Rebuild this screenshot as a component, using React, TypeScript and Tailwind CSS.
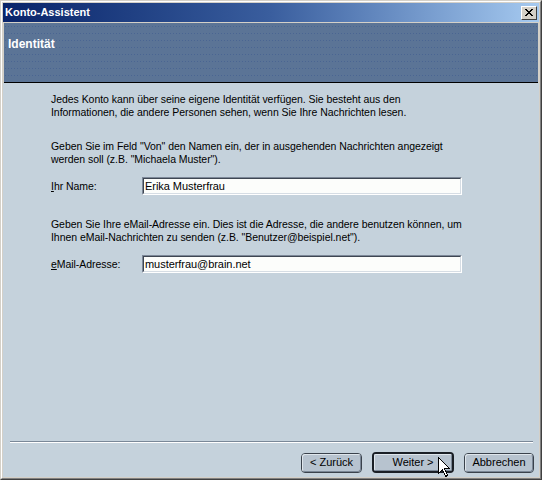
import React from "react";

const font = { fontFamily: '"Liberation Sans", Arial, sans-serif' };

function Field({ value }: { value: string }) {
  return (
    <div className="w-[320px] h-[18px] border border-t-[#7d8898] border-l-[#7d8898] border-b-white border-r-white">
      <div className="h-full border border-t-[#3e4652] border-l-[#3e4652] border-b-[#d6dde4] border-r-[#d6dde4] bg-[#fcfdfb] pl-[1px] text-[11px] leading-[14px] text-black">
        {value}
      </div>
    </div>
  );
}

function Btn({ children, w, def }: { children: React.ReactNode; w: string; def?: boolean }) {
  if (def) {
    return (
      <div className={`${w} h-[21px] rounded-[4px] border-2 border-[#1a1f26] bg-[#b7c3cf] flex items-center justify-center text-[11px] text-black`}>
        <div className="w-full h-full rounded-[2px] border border-t-[#dfe6ec] border-l-[#dfe6ec] border-b-[#7a8796] border-r-[#7a8796] flex items-center justify-center">
          {children}
        </div>
      </div>
    );
  }
  return (
    <div className={`${w} h-[20px] rounded-[4px] border border-[#3a424c] bg-[#b7c3cf] text-[11px] text-black`}>
      <div className="w-full h-full rounded-[3px] border border-t-[#dfe6ec] border-l-[#dfe6ec] border-b-[#7a8796] border-r-[#7a8796] flex items-center justify-center">
        {children}
      </div>
    </div>
  );
}

export default function App() {
  return (
    <div style={font} className="relative w-[542px] h-[480px] border border-t-[#d4d0c8] border-l-[#d4d0c8] border-b-[#404040] border-r-[#404040]">
      <div className="w-full h-full border border-t-white border-l-white border-b-[#808080] border-r-[#808080] bg-[#d4d0c8] p-[1px] flex flex-col">
        {/* title bar */}
        <div className="h-[19px] bg-gradient-to-r from-[#0a246a] via-[#3a5e9e] to-[#a6caf0] flex items-center justify-between pl-[2px] pr-[2px]">
          <span className="text-[11px] font-bold text-white leading-none">Konto-Assistent</span>
          <div className="w-[16px] h-[14px] bg-[#d4d0c8] border border-t-white border-l-white border-b-[#404040] border-r-[#404040] flex items-center justify-center">
            <svg width="8" height="7" viewBox="0 0 8 7" shapeRendering="crispEdges">
              <path d="M0 0h2v1h-2zM6 0h2v1h-2zM1 1h2v1h-2zM5 1h2v1h-2zM2 2h4v1h-4zM3 3h2v1h-2zM2 4h4v1h-4zM1 5h2v1h-2zM5 5h2v1h-2zM0 6h2v1h-2zM6 6h2v1h-2z" fill="#000" />
            </svg>
          </div>
        </div>
        <div className="h-[1px] bg-[#d4d0c8]" />
        {/* header band */}
        <div className="h-[60px] mx-[1px] bg-[#5b7496] bg-[radial-gradient(circle,#4a6592_0.7px,transparent_0.9px)] bg-[length:3px_7px] border-b border-black pl-[4px] pt-[8px]">
          <span className="text-[12px] font-bold text-white">Identität</span>
        </div>
        {/* body */}
        <div className="flex-1 bg-[#c5d2dc] flex flex-col text-[10.5px] leading-[13px] tracking-[-0.05px] text-black">
          <div className="pl-[48px] pt-[10px] flex flex-col">
            <p>
              Jedes Konto kann über seine eigene Identität verfügen. Sie besteht aus den
              <br />
              Informationen, die andere Personen sehen, wenn Sie Ihre Nachrichten lesen.
            </p>
            <p className="mt-[21px]">
              Geben Sie im Feld "Von" den Namen ein, der in ausgehenden Nachrichten angezeigt
              <br />
              werden soll (z.B. "Michaela Muster").
            </p>
            <div className="mt-[11px] flex items-center">
              <span className="w-[91px]">
                <span className="underline">I</span>hr Name:
              </span>
              <Field value="Erika Musterfrau" />
            </div>
            <p className="mt-[23px]">
              Geben Sie Ihre eMail-Adresse ein. Dies ist die Adresse, die andere benutzen können, um
              <br />
              Ihnen eMail-Nachrichten zu senden (z.B. "Benutzer@beispiel.net").
            </p>
            <div className="mt-[11px] flex items-center">
              <span className="w-[91px]">
                <span className="underline">e</span>Mail-Adresse:
              </span>
              <Field value="musterfrau@brain.net" />
            </div>
          </div>
          <div className="flex-1" />
          <div className="ml-[7px] mr-[6px] h-[2px] border-t border-t-[#7a8898] border-b border-b-white" />
          <div className="flex justify-end items-center gap-[10px] pr-[5px] pt-[9px] pb-[4px] tracking-normal">
            <Btn w="w-[61px]">&lt; Zurück</Btn>
            <Btn w="w-[82px]" def>
              Weiter &gt;
            </Btn>
            <Btn w="w-[70px]">Abbrechen</Btn>
          </div>
        </div>
      </div>
      {/* mouse cursor */}
      <svg className="absolute left-[437px] top-[456px]" width="13" height="21" viewBox="0 0 13 21" shapeRendering="crispEdges">
        <polygon points="0.5,0.5 0.5,16.5 4.5,12.5 7.5,19.5 9.5,18.5 6.5,11.5 11.5,11.5" fill="#fff" stroke="#000" strokeWidth="1" />
      </svg>
    </div>
  );
}
